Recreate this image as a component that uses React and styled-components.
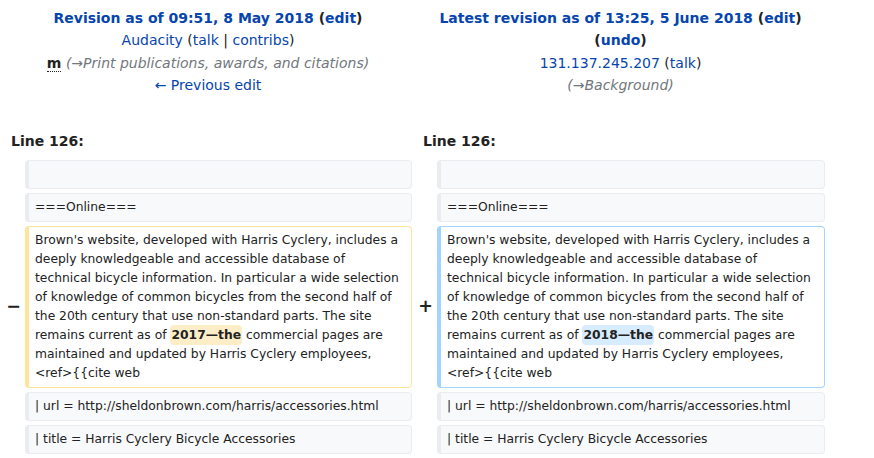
import React from 'react';
import styled, { createGlobalStyle } from 'styled-components';

const GlobalStyle = createGlobalStyle`
  body {
    margin: 0;
    background: #fff;
    font-family: "DejaVu Sans", sans-serif;
    color: #222;
  }
`;

const DiffGrid = styled.div`
  display: grid;
  grid-template-columns: 17px 387px 17px 388px;
  column-gap: 4px;
  row-gap: 4px;
  padding: 4px;
  width: max-content;
`;

const HeaderCell = styled.div`
  grid-column: span 2;
  text-align: center;
  font-size: 14px;
  line-height: 1.6;
  padding-top: 3px;
`;

const Title = styled.div`
  font-weight: bold;
`;

const Link = styled.a`
  color: #0645ad;
  text-decoration: none;
  cursor: pointer;
`;

const Minor = styled.abbr`
  font-weight: bold;
  text-decoration: none;
  border-bottom: 1px dotted #222;
`;

const Comment = styled.span`
  font-style: italic;
  color: #72777d;
`;

const LineNo = styled.div`
  grid-column: span 2;
  font-weight: bold;
  font-size: 14px;
  line-height: 1.6;
  padding: 29px 7px 4px;
`;

const Marker = styled.div`
  font-weight: bold;
  font-size: 17.5px;
  line-height: 1.2;
  text-align: right;
  align-self: center;
`;

const tones = {
  context: { bg: '#f8f9fa', border: '#eaecf0' },
  deleted: { bg: '#fff', border: '#ffe49c' },
  added: { bg: '#fff', border: '#a3d3ff' },
};

const Line = styled.div`
  box-sizing: border-box;
  min-height: 29px;
  font-size: 12.32px;
  line-height: 19px;
  padding: 4px 10px 4px 6px;
  background: ${p => tones[p.$kind].bg};
  border: 1px solid ${p => tones[p.$kind].border};
  border-left-width: 4px;
  border-radius: 4px;
  white-space: pre-wrap;
  overflow-wrap: break-word;
`;

const Change = styled.span`
  font-weight: bold;
  border-radius: 4px;
  padding: 3px 1px;
  background: ${p => (p.$kind === 'added' ? '#d8ecff' : '#feeec8')};
`;

const paragraph = (year, kind) => (
  <>
    Brown's website, developed with Harris Cyclery, includes a deeply knowledgeable and
    accessible database of technical bicycle information. In particular a wide selection of
    knowledge of common bicycles from the second half of the 20th century that use
    non-standard parts. The site remains current as of <Change $kind={kind}>{year}—the</Change>{' '}
    commercial pages are maintained and updated by Harris Cyclery employees, &lt;ref&gt;{'{{'}cite web
  </>
);

const ContextRow = ({ text }) => (
  <>
    <Marker />
    <Line $kind="context">{text}</Line>
    <Marker />
    <Line $kind="context">{text}</Line>
  </>
);

const App = () => (
  <>
    <GlobalStyle />
    <DiffGrid>
      <HeaderCell>
        <Title>
          <Link>Revision as of 09:51, 8 May 2018</Link> (<Link>edit</Link>)
        </Title>
        <div>
          <Link>Audacity</Link> (<Link>talk</Link> | <Link>contribs</Link>)
        </div>
        <div>
          <Minor title="This is a minor edit">m</Minor>{' '}
          <Comment>(→Print publications, awards, and citations)</Comment>
        </div>
        <div>
          <Link>← Previous edit</Link>
        </div>
      </HeaderCell>
      <HeaderCell>
        <Title>
          <Link>Latest revision as of 13:25, 5 June 2018</Link> (<Link>edit</Link>) (<Link>undo</Link>)
        </Title>
        <div>
          <Link>131.137.245.207</Link> (<Link>talk</Link>)
        </div>
        <div>
          <Comment>(→Background)</Comment>
        </div>
      </HeaderCell>

      <LineNo>Line 126:</LineNo>
      <LineNo>Line 126:</LineNo>

      <ContextRow text="" />
      <ContextRow text="===Online===" />

      <Marker>−</Marker>
      <Line $kind="deleted">{paragraph('2017', 'deleted')}</Line>
      <Marker>+</Marker>
      <Line $kind="added">{paragraph('2018', 'added')}</Line>

      <ContextRow text="| url = http://sheldonbrown.com/harris/accessories.html" />
      <ContextRow text="| title = Harris Cyclery Bicycle Accessories" />
    </DiffGrid>
  </>
);

export default App;
